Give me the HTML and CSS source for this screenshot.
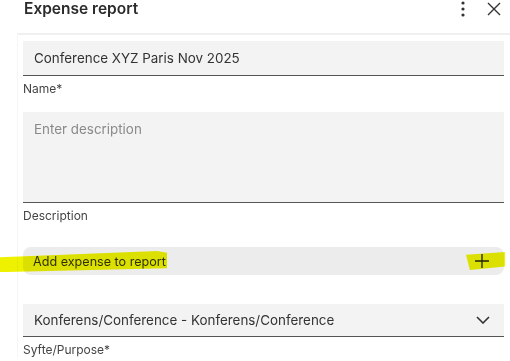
FILE: index.html
```html
<!DOCTYPE html>
<html>
<head>
<meta charset="utf-8">
<link rel="stylesheet" href="styles.css">
</head>
<body>
<div class="header">
  <h1 class="title">Expense report</h1>
  <div class="actions">
    <svg class="icon-dots" width="6" height="16" viewBox="0 0 6 16"><circle cx="3" cy="2" r="1.6" fill="#333"/><circle cx="3" cy="8" r="1.6" fill="#333"/><circle cx="3" cy="14" r="1.6" fill="#333"/></svg>
    <svg class="icon-close" width="14" height="14" viewBox="0 0 14 14"><path d="M1 1L13 13M13 1L1 13" stroke="#333" stroke-width="1.4" fill="none"/></svg>
  </div>
</div>
<div class="card">
  <div class="field">
    <div class="input">Conference XYZ Paris Nov 2025</div>
    <div class="label">Name*</div>
  </div>
  <div class="field">
    <div class="input textarea placeholder">Enter description</div>
    <div class="label">Description</div>
  </div>
  <div class="add-wrap">
    <div class="add-btn">
      <span class="add-text">Add expense to report</span>
      <svg class="icon-plus" width="16" height="16" viewBox="0 0 16 16"><path d="M8 1V15M1 8H15" stroke="#222" stroke-width="1.3" fill="none"/></svg>
    </div>
    <span class="hl hl-left"></span>
    <span class="hl hl-right"></span>
  </div>
  <div class="field select-field">
    <div class="input select">
      <span>Konferens/Conference - Konferens/Conference</span>
      <svg class="icon-chev" width="14" height="8" viewBox="0 0 14 8"><path d="M1 1L7 7L13 1" stroke="#333" stroke-width="1.6" fill="none"/></svg>
    </div>
    <div class="label">Syfte/Purpose*</div>
  </div>
</div>
</body>
</html>
```
FILE: styles.css
```css
* { box-sizing: border-box; }
html, body { margin: 0; padding: 0; background: #fff; }
body {
  font-family: Inter, "Noto Sans", sans-serif;
  color: #333;
  width: 510px;
  height: 361px;
  overflow: hidden;
}
.header {
  display: flex;
  align-items: center;
  justify-content: space-between;
  height: 20px;
  padding: 0 9px 0 24px;
  margin-bottom: 13px;
}
.title {
  margin: 0;
  font-size: 15.5px;
  font-weight: 600;
  color: #2b2b2b;
  line-height: 20px;
  margin-top: -2px;
}
.actions {
  display: flex;
  align-items: center;
  gap: 19px;
  margin-top: -2px;
  margin-right: 0;
}
.icon-dots { margin-right: 2px; }
.card {
  margin-left: 17px;
  border-top: 2px solid #f0f0f0;
  border-left: 1px solid #f6f6f6;
  padding: 6px 6px 0 5px;
}
.field { display: flex; flex-direction: column; }
.input {
  background: #f3f3f3;
  border-bottom: 1px solid #555;
  height: 35px;
  padding: 0 11px;
  display: flex;
  align-items: center;
  font-size: 13.4px;
  color: #333;
}
.textarea {
  height: 91px;
  align-items: flex-start;
  padding-top: 9px;
}
.placeholder { color: #8a8a8a; }
.label {
  font-size: 12px;
  color: #444;
  line-height: 14px;
  margin-top: 6px;
  margin-bottom: 16px;
}
.add-wrap {
  position: relative;
  margin-top: 8px;
  margin-bottom: 29px;
}
.add-btn {
  background: #ececec;
  border-radius: 8px;
  height: 28px;
  display: flex;
  align-items: center;
  justify-content: space-between;
  padding: 0 14px 0 10px;
  font-size: 12.6px;
  color: #333;
}
.hl {
  position: absolute;
  background: #eef200;
  mix-blend-mode: multiply;
}
.hl-left {
  left: -23px;
  width: 167px;
  top: 4px;
  height: 21px;
  clip-path: polygon(0 30%, 94% 0, 100% 8%, 100% 82%, 4% 100%, 0 100%);
}
.hl-right {
  left: 443px;
  width: 39px;
  top: 5px;
  height: 18px;
  clip-path: polygon(0 15%, 100% 0, 100% 80%, 10% 100%);
}
.select { justify-content: space-between; padding-right: 14px; height: 33px; }
.select-field .label { margin-bottom: 0; }
```
